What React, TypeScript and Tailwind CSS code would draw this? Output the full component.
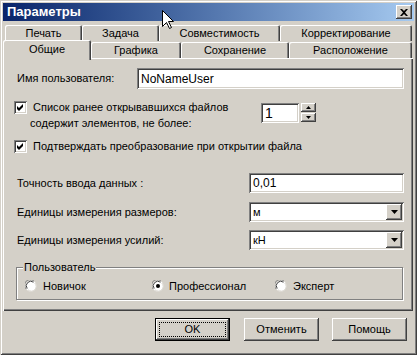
import React from 'react';

const raised =
  'shadow-[inset_-1px_-1px_#404040,inset_1px_1px_#ffffff,inset_-2px_-2px_#808080,inset_2px_2px_#d4d0c8]';
const sunken =
  'shadow-[inset_1px_1px_#808080,inset_-1px_-1px_#ffffff,inset_2px_2px_#404040,inset_-2px_-2px_#d4d0c8]';

function Tab({ label, w, selected }: { label: string; w: string; selected?: boolean }) {
  return (
    <div
      className={`${w} ${
        selected ? 'relative z-10 -mb-[2px] h-[20px] bg-[#d4d0c8]' : 'h-[16px]'
      } flex shrink-0 items-center justify-center rounded-t-[2px] shadow-[inset_1px_1px_#ffffff,inset_-1px_0_#404040,inset_-2px_0_#808080]`}
    >
      <span className={selected ? 'pb-[2px]' : ''}>{label}</span>
    </div>
  );
}

function Checkbox() {
  return (
    <div className={`h-[13px] w-[13px] shrink-0 bg-white ${sunken}`}>
      <svg width="13" height="13" viewBox="0 0 13 13">
        <path d="M3 5 L5 7 L9 3 L9 6 L5 10 L3 8 Z" fill="#000" />
      </svg>
    </div>
  );
}

function Radio({ checked }: { checked?: boolean }) {
  return (
    <svg width="12" height="12" viewBox="0 0 12 12" className="shrink-0">
      <circle cx="6" cy="6" r="5.5" fill="#ffffff" />
      <path d="M1.2 9 A5.5 5.5 0 0 1 9 1.2" stroke="#808080" strokeWidth="1" fill="none" />
      <path d="M2.2 8.5 A4.5 4.5 0 0 1 8.5 2.2" stroke="#404040" strokeWidth="1" fill="none" />
      <path d="M9.8 3 A4.5 4.5 0 0 1 3 9.8" stroke="#d4d0c8" strokeWidth="1" fill="none" />
      {checked && <circle cx="6" cy="6" r="2" fill="#000" />}
    </svg>
  );
}

function Select({ value }: { value: string }) {
  return (
    <div className={`flex h-[20px] w-[155px] items-center bg-white pl-[4px] pr-[2px] ${sunken}`}>
      <span className="flex-1">{value}</span>
      <div className={`flex h-[16px] w-[16px] items-center justify-center bg-[#d4d0c8] ${raised}`}>
        <svg width="7" height="4" viewBox="0 0 7 4">
          <path d="M0 0 H7 L3.5 4 Z" fill="#000" />
        </svg>
      </div>
    </div>
  );
}

function Button({ label, def }: { label: string; def?: boolean }) {
  if (def) {
    return (
      <div className="h-[23px] w-[75px] border border-black">
        <div className={`flex h-full w-full items-center justify-center p-[3px] ${raised}`}>
          <div className="flex h-full w-full items-center justify-center border border-dotted border-black">
            {label}
          </div>
        </div>
      </div>
    );
  }
  return (
    <div className={`flex h-[23px] w-[75px] items-center justify-center ${raised}`}>{label}</div>
  );
}

export default function App() {
  return (
    <div className="relative h-[355px] w-[417px] bg-[#d4d0c8] p-[3px] font-['Liberation_Sans',Arial,sans-serif] text-[11px] text-black shadow-[inset_1px_1px_#d4d0c8,inset_-1px_-1px_#404040,inset_2px_2px_#ffffff,inset_-2px_-2px_#808080]">
      {/* Title bar */}
      <div className="flex h-[18px] items-center justify-between bg-gradient-to-r from-[#0a246a] to-[#a6caf0] pl-[4px] pr-[2px]">
        <span className="text-[13px] font-bold text-white">Параметры</span>
        <div className={`flex h-[14px] w-[16px] items-center justify-center bg-[#d4d0c8] ${raised}`}>
          <svg width="8" height="7" viewBox="0 0 8 7">
            <path d="M0 0 H2 L4 2 L6 0 H8 L5 3.5 L8 7 H6 L4 5 L2 7 H0 L3 3.5 Z" fill="#000" />
          </svg>
        </div>
      </div>

      {/* Tabs */}
      <div className="mt-[4px] ml-[2px] flex h-[16px]">
        <Tab label="Печать" w="w-[77px]" />
        <Tab label="Задача" w="w-[77px]" />
        <Tab label="Совместимость" w="w-[121px]" />
        <Tab label="Корректирование" w="w-[132px]" />
      </div>
      <div className="flex h-[17px] items-end">
        <Tab label="Общие" w="w-[88px]" selected />
        <Tab label="Графика" w="w-[90px]" />
        <Tab label="Сохранение" w="w-[108px]" />
        <Tab label="Расположение" w="w-[123px]" />
      </div>

      {/* Panel */}
      <div className="flex h-[253px] w-[410px] flex-col pl-[14px] pr-[9px] shadow-[inset_1px_1px_#ffffff,inset_-1px_-1px_#404040,inset_-2px_-2px_#808080]">
        <div className="mt-[10px] flex h-[21px] items-center">
          <span className="w-[120px]">Имя пользователя:</span>
          <div className={`flex h-full flex-1 items-center bg-white pl-[4px] text-[12px] ${sunken}`}>
            NoNameUser
          </div>
        </div>

        <div className="mt-[10px] flex h-[32px]">
          <div className="-ml-[3px] mt-[2px]">
            <Checkbox />
          </div>
          <div className="ml-[6px] w-[228px] leading-[16px]">
            <div>Список ранее открывавшихся файлов</div>
            <div className="-ml-[3px]">содержит элементов, не более:</div>
          </div>
          <div className="mt-[4px] flex">
            <div className={`flex h-[20px] w-[38px] items-center bg-white pl-[4px] text-[14px] ${sunken}`}>1</div>
            <div className="ml-[2px] flex flex-col gap-[1px]">
              <div className={`flex h-[9px] w-[15px] items-center justify-center ${raised}`}>
                <svg width="5" height="3" viewBox="0 0 5 3">
                  <path d="M2.5 0 L5 3 H0 Z" fill="#000" />
                </svg>
              </div>
              <div className={`flex h-[9px] w-[15px] items-center justify-center ${raised}`}>
                <svg width="5" height="3" viewBox="0 0 5 3">
                  <path d="M0 0 H5 L2.5 3 Z" fill="#000" />
                </svg>
              </div>
            </div>
          </div>
        </div>

        <div className="mt-[7px] flex h-[16px] items-center">
          <div className="-ml-[3px]">
            <Checkbox />
          </div>
          <span className="ml-[6px]">Подтверждать преобразование при открытии файла</span>
        </div>

        <div className="mt-[19px] flex h-[20px] items-center justify-between">
          <span>Точность ввода данных :</span>
          <div className={`flex h-full w-[155px] items-center bg-white pl-[4px] text-[12px] ${sunken}`}>0,01</div>
        </div>
        <div className="mt-[9px] flex h-[20px] items-center justify-between">
          <span>Единицы измерения размеров:</span>
          <Select value="м" />
        </div>
        <div className="mt-[8px] flex h-[20px] items-center justify-between">
          <span>Единицы измерения усилий:</span>
          <Select value="кН" />
        </div>

        <div className="relative mt-[17px] -ml-[1px] mr-[1px] h-[33px] border border-[#808080] pl-[8px] pt-[11px] shadow-[inset_1px_1px_#ffffff,1px_1px_#ffffff]">
          <span className="absolute -top-[8px] left-[6px] bg-[#d4d0c8] px-[1px] leading-[14px]">Пользователь</span>
          <div className="flex h-[14px] items-center">
            <div className="flex w-[127px] items-center gap-[6px]">
              <Radio />
              <span>Новичок</span>
            </div>
            <div className="flex w-[123px] items-center gap-[5px]">
              <Radio checked />
              <span>Профессионал</span>
            </div>
            <div className="flex items-center gap-[6px]">
              <Radio />
              <span>Эксперт</span>
            </div>
          </div>
        </div>
      </div>

      {/* Buttons */}
      <div className="mt-[7px] flex justify-end pr-[7px]">
        <Button label="OK" def />
        <div className="ml-[14px]">
          <Button label="Отменить" />
        </div>
        <div className="ml-[13px]">
          <Button label="Помощь" />
        </div>
      </div>

      {/* Mouse cursor */}
      <svg className="absolute left-[162px] top-[10px]" width="13" height="20" viewBox="0 0 13 20">
        <path
          d="M0.5 0.5 L0.5 16.5 L4.5 12.5 L7.5 18.5 L9.5 17.5 L6.5 11.5 L11.5 11.5 Z"
          fill="#ffffff"
          stroke="#000000"
          strokeWidth="1"
        />
      </svg>
    </div>
  );
}
